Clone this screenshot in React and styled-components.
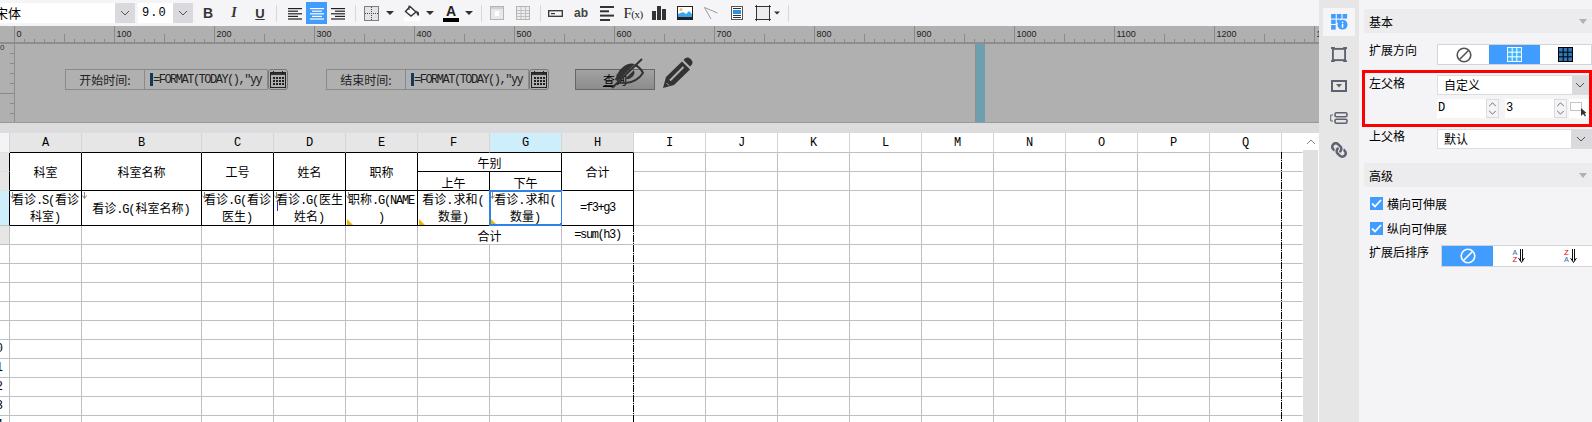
import React from "react";
import styled, { createGlobalStyle } from "styled-components";
import { FaLink } from "react-icons/fa";

const GlobalStyle = createGlobalStyle`
  html, body { margin: 0; padding: 0; background: #f5f5f8; }
  body { font-family: "Noto Sans CJK SC", "Liberation Sans", sans-serif; font-size: 12px; color: #000; }
`;

const MONO = `"Liberation Mono", "Noto Sans CJK SC", monospace`;
const BLUE = "#409cff";
const GRID = "#c0c0c0";

const Page = styled.div`
  display: flex;
  width: 1592px;
  height: 422px;
  overflow: hidden;
`;
const Main = styled.div`
  width: 1319px;
  flex: none;
  display: flex;
  flex-direction: column;
`;

/* toolbar */
const Toolbar = styled.div`
  height: 26px;
  flex: none;
  display: flex;
  align-items: center;
  background: #f5f5f8;
`;
const SelectWrap = styled.div`
  display: flex;
  flex: none;
  height: 20px;
  width: ${(p) => p.$w}px;
  margin-left: ${(p) => p.$ml || 0}px;
  background: #fff;
  overflow: hidden;
`;
const SelectText = styled.div`
  flex: 1;
  line-height: 20px;
  white-space: nowrap;
  margin-left: ${(p) => p.$ml || 0}px;
  font-family: ${(p) => (p.$mono ? MONO : "inherit")};
  font-size: ${(p) => (p.$mono ? 12 : 13)}px;
  letter-spacing: ${(p) => (p.$mono ? 1 : 0)}px;
`;
const ArrowBox = styled.div`
  flex: none;
  width: ${(p) => p.$w || 20}px;
  background: #dadade;
  display: flex;
  align-items: center;
  justify-content: center;
`;
const Tool = styled.div`
  flex: none;
  width: ${(p) => p.$w || 26}px;
  height: 22px;
  display: flex;
  flex-direction: column;
  align-items: center;
  justify-content: center;
  background: ${(p) => (p.$active ? BLUE : "transparent")};
  margin-left: ${(p) => p.$ml || 0}px;
`;
const Sep = styled.div`
  flex: none;
  width: 1px;
  height: 17px;
  background: #d8d8dc;
  margin: 0 ${(p) => p.$r || 2}px 0 ${(p) => p.$l || 3}px;
`;
const Bold = styled.span`
  font: bold 14px "Liberation Sans", sans-serif;
  color: #333;
`;
const Ital = styled.span`
  font: italic bold 14px "Liberation Serif", serif;
  color: #333;
`;
const Under = styled.span`
  font: bold 13px "Liberation Sans", sans-serif;
  color: #333;
  text-decoration: underline;
`;
const FontA = styled.span`
  font: bold 14px/13px "Liberation Sans", sans-serif;
  color: #222;
`;
const ColorBar = styled.div`
  width: 16px;
  height: 4px;
  background: ${(p) => p.$c};
`;
const Small = styled.span`
  font: bold 12px "Liberation Sans", sans-serif;
  color: #444;
`;
const Fx = styled.span`
  font: 15px "Liberation Serif", serif;
  color: #222;
  letter-spacing: -0.5px;
`;
const FxArg = styled.span`
  font-size: 11px;
`;

/* ruler and parameter strip */
const Ruler = styled.svg`
  display: block;
  flex: none;
  background: #b0b0b0;
`;
const ParamArea = styled.div`
  flex: none;
  height: 80px;
  display: flex;
  background: #b0b0b0;
  border-top: 1px solid #8e8e8e;
  border-bottom: 1px solid #999;
  box-sizing: border-box;
`;
const Canvas = styled.div`
  width: 962px;
  flex: none;
  box-sizing: border-box;
  padding: 25px 0 0 50px;
  display: flex;
  align-items: flex-start;
  border-left: 1px solid #8e8e8e;
  border-right: 1px solid #8e8e8e;
`;
const TealBar = styled.div`
  width: 9px;
  flex: none;
  background: #6d9faf;
`;
const ParamLabel = styled.div`
  width: 80px;
  height: 21px;
  box-sizing: border-box;
  border: 1px solid #8a8a8a;
  text-align: center;
  line-height: 20px;
  font-size: 12px;
  color: #222;
  flex: none;
`;
const ParamInput = styled.div`
  width: 123px;
  height: 21px;
  box-sizing: border-box;
  border: 1px solid #8a8a8a;
  border-left: 0;
  flex: none;
  display: flex;
  align-items: center;
  padding-left: 5px;
  white-space: nowrap;
  overflow: hidden;
`;
const Caret = styled.span`
  width: 3px;
  height: 13px;
  background: #123a5c;
  flex: none;
`;
const CodeText = styled.span`
  font: 12px/1 ${MONO};
  letter-spacing: -1.5px;
  color: #222;
`;
const CalButton = styled.div`
  width: 20px;
  height: 21px;
  box-sizing: border-box;
  border: 1px solid #777;
  border-radius: 3px;
  flex: none;
  margin-right: ${(p) => p.$mr}px;
  display: flex;
  align-items: center;
  justify-content: center;
`;
const QueryButton = styled.div`
  width: 80px;
  height: 21px;
  box-sizing: border-box;
  border: 1px solid #666;
  background: linear-gradient(#a2a2a2, #8c8c8c);
  text-align: center;
  line-height: 19px;
  flex: none;
  position: relative;
`;
const QueryKey = styled.span`
  text-decoration: underline;
`;
const EyeMark = styled.svg`
  position: absolute;
  left: 35px;
  top: -12px;
`;
const PencilMark = styled.svg`
  flex: none;
  margin: -12px 0 0 8px;
`;

/* sheet */
const Band = styled.div`
  height: 10px;
  flex: none;
  background: #dcdcde;
`;
const SheetArea = styled.div`
  flex: 1;
  min-height: 0;
  display: flex;
  background: #fff;
  overflow: hidden;
`;
const Grid = styled.div`
  position: relative;
  width: 1303px;
  flex: none;
  display: grid;
  grid-template-columns: 10px 72px 120px repeat(15, 72px) 21px;
  grid-template-rows: 20px 19px 19px 35px;
  grid-auto-rows: 19px;
`;
const Cell = styled.div`
  grid-column: span ${(p) => p.$cols || 1};
  grid-row: span ${(p) => p.$rows || 1};
  position: relative;
  box-sizing: border-box;
  display: flex;
  align-items: center;
  justify-content: center;
  text-align: center;
  line-height: 15px;
  min-width: 0;
  white-space: nowrap;
  padding-top: ${(p) => p.$pt || 0}px;
  background: ${(p) => p.$bg || "#fff"};
  border-right: 1px solid ${(p) => p.$right || GRID};
  border-bottom: 1px solid ${(p) => p.$bottom || GRID};
`;
const ColHead = styled(Cell)`
  font: 12px ${MONO};
  border-right-color: ${(p) => p.$right || "#d4d4d4"};
`;
const Gutter = styled(Cell)`
  justify-content: flex-end;
  overflow: hidden;
  padding-right: 6px;
  font: 12px "Liberation Mono", monospace;
`;
const Latin = styled.span`
  font: 12px ${MONO};
  letter-spacing: -1.2px;
  margin-right: 1.2px;
`;
const Formula = styled.span`
  font: 12px ${MONO};
  letter-spacing: -1.4px;
`;
const ExpandMark = styled.svg`
  position: absolute;
  left: 0;
  top: 1px;
`;
const LeftParent = styled.div`
  position: absolute;
  left: 3px;
  top: 11px;
  width: 1px;
  height: 9px;
  background: #1a3fd8;
`;
const CornerMark = styled.div`
  position: absolute;
  left: 1px;
  bottom: 0;
  width: 0;
  height: 0;
  border-left: 6px solid #f0b400;
  border-top: 6px solid transparent;
`;
const Selection = styled.div`
  position: absolute;
  left: -1px;
  top: -1px;
  right: -2px;
  bottom: -1px;
  border: 2px solid #2f80ed;
  pointer-events: none;
`;
const Handle = styled.div`
  position: absolute;
  right: -4px;
  bottom: -4px;
  width: 5px;
  height: 5px;
  background: #2f80ed;
`;
const PageBreak = styled.div`
  position: absolute;
  left: ${(p) => p.$left}px;
  top: ${(p) => p.$top}px;
  bottom: 0;
  width: 1px;
  background: repeating-linear-gradient(to bottom, #000 0 7px, #ddd 7px 8px, #000 8px 9px, #ddd 9px 10px);
`;
const ScrollBar = styled.div`
  width: 15px;
  flex: none;
  display: flex;
  flex-direction: column;
  background: #e0e0e0;
`;
const ScrollUp = styled.div`
  height: 17px;
  background: #fff;
  display: flex;
  align-items: center;
  justify-content: center;
`;

/* right side */
const Rail = styled.div`
  width: 40px;
  flex: none;
  background: #e6e6e6;
  display: flex;
  flex-direction: column;
  align-items: center;
  padding-top: 8px;
  gap: 4px;
  box-sizing: border-box;
  color: #5d6270;
`;
const RailItem = styled.div`
  width: 32px;
  height: 28px;
  display: flex;
  align-items: center;
  justify-content: center;
  background: ${(p) => (p.$active ? "#f5f5f8" : "transparent")};
`;
const LinkIcon = styled(FaLink)`
  transform: scaleX(-1);
`;
const Panel = styled.div`
  width: 233px;
  flex: none;
  overflow: hidden;
  background: #f4f4f7;
  padding: 9px 0 0 5px;
  box-sizing: border-box;
`;
const SectionHead = styled.div`
  height: 24px;
  margin-top: ${(p) => p.$mt || 0}px;
  background: #ececee;
  display: flex;
  align-items: center;
  justify-content: space-between;
  padding: 0 3px 0 5px;
  font-size: 12px;
`;
const Triangle = styled.span`
  width: 0;
  height: 0;
  border-left: 4px solid transparent;
  border-right: 4px solid transparent;
  border-top: 5px solid #b0b0b0;
  margin-right: 2px;
`;
const PropRow = styled.div`
  display: grid;
  grid-template-columns: 73px 1fr;
  align-items: start;
  margin-top: ${(p) => p.$mt || 0}px;
`;
const PropLabel = styled.div`
  padding-left: ${(p) => p.$pl ?? 5}px;
  line-height: 18px;
  margin-top: ${(p) => p.$mt || 0}px;
`;
const Segments = styled.div`
  display: flex;
  height: 21px;
  box-sizing: border-box;
  border: 1px solid #d4d4d6;
  background: #fff;
  width: 155px;
`;
const Segment = styled.div`
  flex: 1;
  display: flex;
  align-items: center;
  justify-content: center;
  background: ${(p) => (p.$active ? BLUE : "transparent")};
`;
const RedBox = styled.div`
  margin: 5px 0 0 -2px;
  border: 3px solid #f00;
  padding: 2px 0 6px 0;
  height: 57px;
  box-sizing: border-box;
`;
const RedInner = styled.div`
  display: grid;
  grid-template-columns: 72px 1fr;
`;
const Stack = styled.div`
  display: flex;
  flex-direction: column;
  gap: 4px;
`;
const PropSelect = styled.div`
  display: flex;
  height: 20px;
  box-sizing: border-box;
  border: 1px solid #dcdcde;
  background: #fff;
  width: ${(p) => p.$w}px;
`;
const PropValue = styled.div`
  flex: 1;
  padding-left: 6px;
  line-height: 18px;
  font-size: 12px;
`;
const SpinRow = styled.div`
  display: flex;
  height: 19px;
`;
const SpinInput = styled.div`
  width: 49px;
  background: #fff;
  font: 12px/19px ${MONO};
  padding-left: 1px;
  box-sizing: border-box;
`;
const SpinBtns = styled.div`
  width: 13px;
  margin-right: ${(p) => p.$mr}px;
  display: flex;
  flex-direction: column;
  background: #f4f4f7;
  border: 1px solid #dcdcde;
  box-sizing: border-box;
  align-items: center;
  justify-content: space-around;
`;
const PickBtn = styled.div`
  flex: 1;
  background: #fff;
  display: flex;
  align-items: center;
  justify-content: center;
`;
const CheckRow = styled.div`
  display: flex;
  align-items: center;
  gap: 4px;
  height: 25px;
  padding-left: 6px;
  margin-top: ${(p) => p.$mt || 0}px;
`;
const CheckBox = styled.div`
  width: 13px;
  height: 13px;
  background: ${BLUE};
  display: flex;
  align-items: center;
  justify-content: center;
`;
const SortSegments = styled(Segments)`
  height: 22px;
  margin-left: 4px;
  width: 155px;
  border-width: 1px 0 1px 1px;
`;
const SortLetters = styled.div`
  display: flex;
  flex-direction: column;
  font: 8px/7px "Liberation Mono", monospace;
  margin-right: 1px;
`;
const SortLetter = styled.span`
  color: ${(p) => p.$c};
  text-decoration: ${(p) => (p.$u ? "underline" : "none")};
`;

const Chevron = ({ up, color = "#555", w = 10, h = 6 }) => (
  <svg width={w} height={h} viewBox="0 0 10 6">
    <polyline points={up ? "1,5 5,1 9,5" : "1,1 5,5 9,1"} fill="none" stroke={color} strokeWidth="1" />
  </svg>
);

const DropCaret = ({ w = 8 }) => (
  <svg width={w} height="4" viewBox="0 0 8 4">
    <polygon points="0,0 8,0 4,4" fill="#333" />
  </svg>
);

const AlignIcon = ({ mode, color = "#222" }) => {
  const rows = [14, 10, 14, 10, 14];
  return (
    <svg width="14" height="13" viewBox="0 0 14 13">
      {rows.map((len, i) => {
        const x = mode === "left" ? 0 : mode === "right" ? 14 - len : (14 - len) / 2;
        return <rect key={i} x={x} y={i * 2.6 + 1} width={len} height="1.2" fill={color} />;
      })}
    </svg>
  );
};

const BorderIcon = () => (
  <svg width="15" height="15" viewBox="0 0 15 15">
    <rect x="0.5" y="0.5" width="14" height="14" fill="#e4e4e6" stroke="#111" strokeDasharray="1 1" />
    <path d="M7.5 1V14M1 7.5H14" stroke="#444" strokeDasharray="1 1" />
  </svg>
);

const FillIcon = () => (
  <svg width="16" height="12" viewBox="0 0 16 12">
    <path d="M6 1.5 L12 7 L7 11 L1.5 6.5 Z" fill="#fff" stroke="#333" strokeWidth="1.4" />
    <path d="M5 0.5 V5" stroke="#333" />
    <path d="M12 5.5 L15 7.5 Q15.5 10.5 14 11 Q12.5 9.5 12 5.5Z" fill="#333" />
  </svg>
);

const MergeIcon = () => (
  <svg width="14" height="14" viewBox="0 0 14 14">
    <rect x="0.5" y="0.5" width="13" height="13" fill="#e8e8ea" stroke="#b4b4b4" />
    <rect x="1" y="1" width="12" height="2" fill="#d0d0d0" />
    <rect x="5" y="5" width="4" height="5" fill="#fff" />
  </svg>
);

const SplitIcon = () => (
  <svg width="14" height="14" viewBox="0 0 14 14">
    <rect x="0.5" y="0.5" width="13" height="13" fill="#ececee" stroke="#b4b4b4" />
    <path d="M5 1V13M9.5 1V13M1 4.5H13M1 7.5H13M1 10.5H13" stroke="#c0c0c0" />
  </svg>
);

const CellIcon = () => (
  <svg width="15" height="7" viewBox="0 0 15 7">
    <rect x="0.7" y="0.7" width="13.6" height="5.6" fill="none" stroke="#333" strokeWidth="1.3" />
    <rect x="3" y="3" width="4" height="1.2" fill="#333" />
  </svg>
);

const LinesIcon = () => (
  <svg width="15" height="15" viewBox="0 0 15 15">
    <rect y="0" width="14" height="2" fill="#333" />
    <rect y="4.3" width="9" height="2" fill="#333" />
    <rect y="8.6" width="14" height="2" fill="#333" />
    <rect y="13" width="10" height="2" fill="#333" />
  </svg>
);

const BarsIcon = () => (
  <svg width="14" height="14" viewBox="0 0 14 14">
    <rect x="0" y="5" width="4" height="9" fill="#333" />
    <rect x="5" y="0" width="4" height="14" fill="#333" />
    <rect x="10" y="3" width="4" height="11" fill="#333" />
  </svg>
);

const ImageIcon = () => (
  <svg width="16" height="14" viewBox="0 0 16 14">
    <rect width="16" height="14" fill="#222" />
    <rect x="1" y="1" width="14" height="10" fill="#fff" />
    <circle cx="4" cy="3.5" r="1.5" fill="#f5c04a" />
    <path d="M1 11 L1 8 L6 6 L9 8 L12 5 L15 8 L15 11Z" fill="#3aa6f0" />
  </svg>
);

const DiagonalIcon = () => (
  <svg width="14" height="13" viewBox="0 0 14 13">
    <path d="M0.5 0.5 L13.5 6 M0.5 0.5 L7 12" stroke="#999" fill="none" />
  </svg>
);

const DocIcon = () => (
  <svg width="12" height="14" viewBox="0 0 12 14">
    <rect x="0.5" y="0.5" width="11" height="13" fill="#fff" stroke="#555" />
    <rect x="2" y="2" width="8" height="1" fill="#333" />
    <rect x="2" y="4" width="8" height="4" fill="#2f8fe0" />
    <rect x="2" y="9" width="8" height="1" fill="#333" />
    <rect x="2" y="11" width="8" height="1" fill="#333" />
  </svg>
);

const BoxIcon = () => (
  <svg width="16" height="16" viewBox="0 0 16 16">
    <rect x="1.5" y="1.5" width="13" height="13" fill="#ececee" stroke="#333" />
    <path d="M0 1.5H3M1.5 0V3M13 1.5H16M14.5 0V3M0 14.5H3M1.5 13V16M13 14.5H16M14.5 13V16" stroke="#333" />
  </svg>
);

const CalendarIcon = () => (
  <svg width="16" height="17" viewBox="0 0 16 17">
    <rect x="0.5" y="1.5" width="15" height="15" fill="none" stroke="#222" />
    <rect x="1" y="2" width="14" height="2" fill="#333" />
    <path d="M3.5 0V3M12.5 0V3" stroke="#222" />
    {[6, 9, 12].map((y) =>
      [3, 6, 9, 12].map((x) => <rect key={`${x}-${y}`} x={x} y={y} width="2" height="2" fill="#222" />)
    )}
  </svg>
);

const InfoIcon = () => (
  <svg width="17" height="16" viewBox="0 0 22 21">
    <g fill={BLUE}>
      <rect x="0" y="0" width="6" height="6" />
      <rect x="7.5" y="0" width="6" height="6" />
      <rect x="15" y="0" width="6" height="6" />
      <rect x="0" y="7.5" width="6" height="5.5" />
      <rect x="0" y="14.5" width="6" height="6" />
      <rect x="7.5" y="7.5" width="4" height="4" />
      <circle cx="15" cy="14" r="6.5" />
    </g>
    <rect x="14" y="10" width="2" height="2" fill="#fff" />
    <rect x="14" y="13" width="2" height="5" fill="#fff" />
  </svg>
);

const FrameIcon = () => (
  <svg width="16" height="15" viewBox="0 0 17 16">
    <rect x="2" y="2" width="13" height="12" fill="none" stroke="#5d6270" strokeWidth="2" />
    <path d="M0 1H4M13 1H17M0 15H4M13 15H17" stroke="#5d6270" strokeWidth="2" />
  </svg>
);

const DropBoxIcon = () => (
  <svg width="16" height="12" viewBox="0 0 16 12">
    <rect x="1" y="1" width="14" height="10" fill="none" stroke="#5d6270" strokeWidth="2" />
    <polygon points="5,4 11,4 8,7.5" fill="#5d6270" />
  </svg>
);

const WidgetIcon = () => (
  <svg width="18" height="12" viewBox="0 0 18 12">
    <path d="M3 3H0.7V9H3" fill="none" stroke="#5d6270" />
    <rect x="5" y="0.8" width="12" height="4" rx="1.5" fill="none" stroke="#5d6270" strokeWidth="1.6" />
    <rect x="5" y="7.2" width="12" height="4" rx="1.5" fill="none" stroke="#5d6270" strokeWidth="1.6" />
  </svg>
);

const BanIcon = ({ color = "#555", size = 16 }) => (
  <svg width={size} height={size} viewBox="0 0 16 16">
    <circle cx="8" cy="8" r="6.8" fill="none" stroke={color} strokeWidth="1.6" />
    <path d="M3.5 12.5 L12.5 3.5" stroke={color} strokeWidth="1.6" />
  </svg>
);

const CellsIcon = ({ line, fill, size = 15 }) => (
  <svg width={size} height={size} viewBox="0 0 15 15">
    <rect x="0.5" y="0.5" width="14" height="14" fill={fill} stroke={line} />
    <path d="M5.2 0V15M9.8 0V15M0 5.2H15M0 9.8H15" stroke={line} />
  </svg>
);

const PickIcon = () => (
  <svg width="18" height="16" viewBox="0 0 18 16">
    <rect x="0.5" y="1.5" width="11" height="8" fill="none" stroke="#888" strokeDasharray="1 1" />
    <path d="M11 7 L11 15 L13 13 L15 15.5 L16 14.5 L14.5 12.5 L16.5 12 Z" fill="#333" />
  </svg>
);

const CheckMark = () => (
  <svg width="11" height="9" viewBox="0 0 11 9">
    <path d="M1 4.5 L4 7.5 L10 1" fill="none" stroke="#fff" strokeWidth="1.8" />
  </svg>
);

const SortArrow = () => (
  <svg width="7" height="14" viewBox="0 0 7 14">
    <path d="M2.5 0V12M4.5 0V12M0.5 9 L3.5 13.5 L6.5 9" fill="none" stroke="#111" />
  </svg>
);

const ArrowDownMark = () => (
  <ExpandMark width="5" height="7" viewBox="0 0 5 7">
    <path d="M2.5 0V6M0.5 3.5 L2.5 6.5 L4.5 3.5" fill="none" stroke="#888" />
  </ExpandMark>
);

const EyeSlash = () => (
  <EyeMark width="33" height="31" viewBox="0 0 33 31">
    <path d="M4 22 Q8 9 17 6 Q20 5 24 6 L7 23 Z" fill="#333" />
    <path d="M24 7 Q29 9 32 15 Q26 24 15 25 Q10 25 8 24" fill="none" stroke="#333" strokeWidth="2" />
    <path d="M23 12 Q25 18 18 21 L14 21 Z" fill="#333" />
    <path d="M1 30 L31 1" stroke="#333" strokeWidth="2" />
  </EyeMark>
);

const Pencil = () => (
  <PencilMark width="30" height="32" viewBox="0 0 30 32">
    <path d="M0 31 L3 20 L19 4.5 L27 12.5 L11 28 Z" fill="#333" />
    <path d="M7 23.5 L20.5 10" stroke="#b0b0b0" strokeWidth="2" />
    <path d="M3.5 26 L6 28.5" stroke="#b0b0b0" />
    <path d="M20.5 3 L22 1.5 Q24.5 -0.5 27 1.5 L28.5 3 Q30.5 5.5 28.5 8 L27 9.5 Z" fill="#333" />
  </PencilMark>
);

const HorizontalRuler = () => {
  const ticks = [];
  for (let i = 0; i <= 130; i++) {
    const x = 14.5 + i * 10;
    const len = i % 10 === 0 ? 17 : i % 5 === 0 ? 9 : 4;
    ticks.push(<path key={i} d={`M${x} 17V${17 - len}`} stroke="#8a8a8a" />);
  }
  const labels = [];
  for (let n = 0; n <= 13; n++) {
    labels.push(
      <text key={n} x={16.5 + n * 100} y="11" fontSize="9" fontFamily="Liberation Sans, sans-serif" fill="#222">
        {n * 100}
      </text>
    );
  }
  return (
    <Ruler width="1319" height="17">
      {ticks}
      {labels}
      <path d="M0 16.5H1319" stroke="#8e8e8e" />
    </Ruler>
  );
};

const VerticalRuler = () => {
  const ticks = [];
  for (let i = 1; i < 8; i++) {
    const y = 9.5 + (i - 1) * 10;
    ticks.push(<path key={i} d={`M${i === 5 ? 0 : 10} ${y}H15`} stroke="#8a8a8a" />);
  }
  return (
    <Ruler width="14" height="78">
      {ticks}
      <text x="0" y="6" fontSize="8" fontFamily="Liberation Sans, sans-serif" fill="#333">
        0
      </text>
    </Ruler>
  );
};

const DateField = ({ label, gap }) => (
  <>
    <ParamLabel>{label}</ParamLabel>
    <ParamInput>
      <Caret />
      <CodeText>=FORMAT(TODAY(),"yy</CodeText>
    </ParamInput>
    <CalButton $mr={gap}>
      <CalendarIcon />
    </CalButton>
  </>
);

const BLACK = "#000";
const letters = "ABCDEFGHIJKLMNOPQ".split("");
const trailing = "IJKLMNOPQ".split("");

const TrailingCells = ({ row }) => (
  <>
    {trailing.map((c) => (
      <Cell key={`${c}${row}`} />
    ))}
    <Cell $right="#fff" />
  </>
);

const emptyRows = [5, 6, 7, 8, 9, 10, 11, 12, 13, 14];

const Sheet = () => (
  <Grid>
    <ColHead $bg="#f4f4f7" $bottom="#e0e0e0" />
    {letters.map((c, i) => (
      <ColHead
        key={c}
        $bg={c === "G" ? "#cdeefa" : i < 8 ? "#e6e6e6" : "#fff"}
        $bottom={i < 8 ? BLACK : GRID}
      >
        {c}
      </ColHead>
    ))}
    <ColHead $right="#fff" $bottom={GRID} />

    <Gutter $bg="#e6e6e6" $right={BLACK} $bottom="#e0e0e0" />
    <Cell $rows={2} $right={BLACK} $bottom={BLACK}>科室</Cell>
    <Cell $rows={2} $right={BLACK} $bottom={BLACK}>科室名称</Cell>
    <Cell $rows={2} $right={BLACK} $bottom={BLACK}>工号</Cell>
    <Cell $rows={2} $right={BLACK} $bottom={BLACK}>姓名</Cell>
    <Cell $rows={2} $right={BLACK} $bottom={BLACK}>职称</Cell>
    <Cell $cols={2} $right={BLACK} $bottom={BLACK}>午别</Cell>
    <Cell $rows={2} $right={BLACK} $bottom={BLACK}>合计</Cell>
    <TrailingCells row={1} />

    <Gutter $bg="#e6e6e6" $right={BLACK} $bottom="#e0e0e0" />
    <Cell $right={BLACK} $bottom={BLACK} $pt={3}>上午</Cell>
    <Cell $right={BLACK} $bottom={BLACK} $pt={3}>下午</Cell>
    <TrailingCells row={2} />

    <Gutter $bg="#cdeefa" $right={BLACK} />
    <Cell $right={BLACK} $bottom={BLACK}>
      <ArrowDownMark />
      <span>看诊<Latin>.S(</Latin>看诊<br />科室<Latin>)</Latin></span>
    </Cell>
    <Cell $right={BLACK} $bottom={BLACK}>
      <ArrowDownMark />
      <span>看诊<Latin>.G(</Latin>科室名称<Latin>)</Latin></span>
    </Cell>
    <Cell $right={BLACK} $bottom={BLACK}>
      <ArrowDownMark />
      <span>看诊<Latin>.G(</Latin>看诊<br />医生<Latin>)</Latin></span>
    </Cell>
    <Cell $right={BLACK} $bottom={BLACK}>
      <ArrowDownMark />
      <LeftParent />
      <span>看诊<Latin>.G(</Latin>医生<br />姓名<Latin>)</Latin></span>
    </Cell>
    <Cell $right={BLACK} $bottom={BLACK}>
      <ArrowDownMark />
      <CornerMark />
      <span>职称<Latin>.G(NAME</Latin><br /><Latin>)</Latin></span>
    </Cell>
    <Cell $right={BLACK} $bottom={BLACK}>
      <CornerMark />
      <span>看诊<Latin>.</Latin>求和<Latin>(</Latin><br />数量<Latin>)</Latin></span>
    </Cell>
    <Cell $right={BLACK} $bottom={BLACK}>
      <ArrowDownMark />
      <CornerMark />
      <span>看诊<Latin>.</Latin>求和<Latin>(</Latin><br />数量<Latin>)</Latin></span>
      <Selection>
        <Handle />
      </Selection>
    </Cell>
    <Cell $right={BLACK} $bottom={BLACK}>
      <Formula>=f3+g3</Formula>
    </Cell>
    <TrailingCells row={3} />

    <Gutter $bg="#e6e6e6" />
    <Cell />
    <Cell />
    <Cell />
    <Cell />
    <Cell />
    <Cell $cols={2}>合计</Cell>
    <Cell>
      <Formula>=sum(h3)</Formula>
    </Cell>
    <TrailingCells row={4} />

    {emptyRows.map((row) => (
      <React.Fragment key={row}>
        <Gutter>{row >= 10 ? row : ""}</Gutter>
        {letters.slice(0, 8).map((c) => (
          <Cell key={c} />
        ))}
        <TrailingCells row={row} />
      </React.Fragment>
    ))}

    <PageBreak $left={633} $top={92} />
    <PageBreak $left={1281} $top={19} />
  </Grid>
);

const Arrow = () => (
  <ArrowBox>
    <Chevron />
  </ArrowBox>
);

const Spinner = ({ mr }) => (
  <SpinBtns $mr={mr}>
    <Chevron up w={9} h={5} />
    <Chevron w={9} h={5} />
  </SpinBtns>
);

export default function App() {
  return (
    <Page>
      <GlobalStyle />
      <Main>
        <Toolbar>
          <SelectWrap $w={135}>
            <SelectText $ml={-5}>宋体</SelectText>
            <Arrow />
          </SelectWrap>
          <SelectWrap $w={55} $ml={3}>
            <SelectText $ml={4} $mono>9.0</SelectText>
            <Arrow />
          </SelectWrap>
          <Tool $ml={2}><Bold>B</Bold></Tool>
          <Tool><Ital>I</Ital></Tool>
          <Tool><Under>U</Under></Tool>
          <Sep />
          <Tool $w={22} $ml={5}><AlignIcon mode="left" /></Tool>
          <Tool $w={21} $active><AlignIcon mode="center" color="#fff" /></Tool>
          <Tool $w={22}><AlignIcon mode="right" /></Tool>
          <Sep $l={6} $r={0} />
          <Tool $w={27}><BorderIcon /></Tool>
          <Tool $w={10}><DropCaret /></Tool>
          <Tool $ml={4}><FillIcon /><ColorBar $c="#fff" /></Tool>
          <Tool $w={10}><DropCaret /></Tool>
          <Tool $ml={3}><FontA>A</FontA><ColorBar $c="#000" /></Tool>
          <Tool $w={10}><DropCaret /></Tool>
          <Sep $l={7} $r={2} />
          <Tool><MergeIcon /></Tool>
          <Tool><SplitIcon /></Tool>
          <Sep $l={4} $r={1} />
          <Tool><CellIcon /></Tool>
          <Tool><Small>ab</Small></Tool>
          <Tool><LinesIcon /></Tool>
          <Tool><Fx>F<FxArg>(x)</FxArg></Fx></Tool>
          <Tool><BarsIcon /></Tool>
          <Tool><ImageIcon /></Tool>
          <Tool><DiagonalIcon /></Tool>
          <Tool><DocIcon /></Tool>
          <Tool $w={20} $ml={3}><BoxIcon /></Tool>
          <Tool $w={8}><DropCaret w={6} /></Tool>
          <Sep $l={7} />
        </Toolbar>
        <HorizontalRuler />
        <ParamArea>
          <VerticalRuler />
          <Canvas>
            <DateField label="开始时间:" gap={38} />
            <DateField label="结束时间:" gap={26} />
            <QueryButton>
              <QueryKey>查</QueryKey>询
              <EyeSlash />
            </QueryButton>
            <Pencil />
          </Canvas>
          <TealBar />
        </ParamArea>
        <Band />
        <SheetArea>
          <Sheet />
          <ScrollBar>
            <ScrollUp><Chevron up color="#888" /></ScrollUp>
          </ScrollBar>
        </SheetArea>
      </Main>
      <Rail>
        <RailItem $active><InfoIcon /></RailItem>
        <RailItem><FrameIcon /></RailItem>
        <RailItem><DropBoxIcon /></RailItem>
        <RailItem><WidgetIcon /></RailItem>
        <RailItem><LinkIcon size={16} /></RailItem>
      </Rail>
      <Panel>
        <SectionHead>基本<Triangle /></SectionHead>
        <PropRow $mt={11}>
          <PropLabel $mt={-3}>扩展方向</PropLabel>
          <Segments>
            <Segment><BanIcon /></Segment>
            <Segment $active><CellsIcon line="#fff" fill="#3fb5ff" /></Segment>
            <Segment><CellsIcon line="#000" fill="#2f78b5" /></Segment>
          </Segments>
        </PropRow>
        <RedBox>
          <RedInner>
            <PropLabel $pl={4} $mt={-1}>左父格</PropLabel>
            <Stack>
              <PropSelect $w={152}>
                <PropValue>自定义</PropValue>
                <ArrowBox $w={16}><Chevron /></ArrowBox>
              </PropSelect>
              <SpinRow>
                <SpinInput>D</SpinInput>
                <Spinner mr={6} />
                <SpinInput>3</SpinInput>
                <Spinner mr={2} />
                <PickBtn><PickIcon /></PickBtn>
              </SpinRow>
            </Stack>
          </RedInner>
        </RedBox>
        <PropRow $mt={2}>
          <PropLabel $mt={-2}>上父格</PropLabel>
          <PropSelect $w={155}>
            <PropValue>默认</PropValue>
            <ArrowBox><Chevron /></ArrowBox>
          </PropSelect>
        </PropRow>
        <SectionHead $mt={14}>高级<Triangle /></SectionHead>
        <CheckRow $mt={4}><CheckBox><CheckMark /></CheckBox>横向可伸展</CheckRow>
        <CheckRow><CheckBox><CheckMark /></CheckBox>纵向可伸展</CheckRow>
        <PropRow $mt={4}>
          <PropLabel $mt={-2}>扩展后排序</PropLabel>
          <SortSegments>
            <Segment $active><BanIcon color="#fff" /></Segment>
            <Segment>
              <SortLetters><SortLetter $c="#2f78b5">A</SortLetter><SortLetter $c="#e00">Z</SortLetter></SortLetters>
              <SortArrow />
            </Segment>
            <Segment>
              <SortLetters><SortLetter $c="#e00">Z</SortLetter><SortLetter $c="#2f78b5">A</SortLetter></SortLetters>
              <SortArrow />
            </Segment>
          </SortSegments>
        </PropRow>
      </Panel>
    </Page>
  );
}
